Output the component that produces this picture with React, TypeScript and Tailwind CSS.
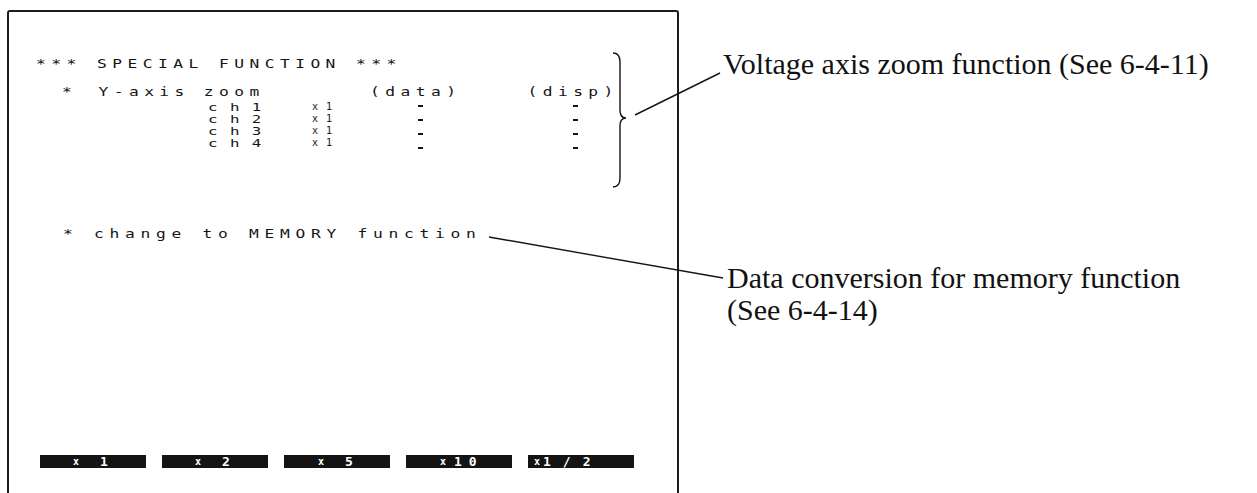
import React from 'react';

const mono = { fontFamily: "'DejaVu Sans Mono', 'Liberation Mono', monospace" };
const serif = { fontFamily: "'Liberation Serif', 'Times New Roman', serif" };

const channels = ['ch1', 'ch2', 'ch3', 'ch4'];

function SoftKey({ children, pad }: { children: React.ReactNode; pad: string }) {
  return (
    <div className={`w-[106px] h-[13px] bg-[#141414] flex items-center text-white font-bold leading-none ${pad}`}>
      {children}
    </div>
  );
}

export default function App() {
  return (
    <div className="relative w-[1257px] h-[493px] overflow-hidden bg-white flex items-start text-[#151515]">
      {/* screen dump (wide plotter lettering = mono stretched 1.3x) */}
      <div
        className="ml-[7px] mt-[10px] w-[672px] h-[500px] border-2 border-b-0 border-[#1c1c1c] rounded-t-[3px] pl-[27px] pt-[44px] flex flex-col shrink-0"
        style={mono}
      >
        <div className="origin-left scale-x-[1.3] text-[12.5px] leading-[15px] tracking-[4.2px] whitespace-pre">
          *** SPECIAL FUNCTION ***
        </div>

        <div className="mt-[13px] origin-left scale-x-[1.3] flex text-[12.5px] leading-[15px] tracking-[4.2px] whitespace-pre">
          <span className="ml-[20px] w-[28px]">*</span>
          <span className="w-[81px]">Y-axis</span>
          <span className="w-[128px]">zoom</span>
          <span className="w-[121px]">(data)</span>
          <span>(disp)</span>
        </div>

        <div className="mt-[2px] ml-[172px] flex">
          <div className="w-[104px] flex flex-col text-[10.5px] leading-[12px] tracking-[8.3px]">
            {channels.map((c) => (
              <span key={c} className="origin-left scale-x-[1.5]">{c}</span>
            ))}
          </div>
          <div className="w-[106px] flex flex-col text-[10px] leading-[12px] tracking-[1px] whitespace-pre">
            {channels.map((c) => (
              <span key={c}>x 1</span>
            ))}
          </div>
          <div className="w-[155px] flex flex-col pt-[4px] gap-[12px]">
            {channels.map((c) => (
              <div key={c} className="w-[5px] h-[2px] bg-[#151515]" />
            ))}
          </div>
          <div className="flex flex-col pt-[4px] gap-[12px]">
            {channels.map((c) => (
              <div key={c} className="w-[5px] h-[2px] bg-[#151515]" />
            ))}
          </div>
        </div>

        <div className="mt-[77px] ml-[27px] origin-left scale-x-[1.3] text-[12.5px] leading-[15px] tracking-[4.4px] whitespace-pre">
          * change to MEMORY function
        </div>

        <div className="mt-[214px] ml-[4px] flex gap-[16px]">
          <SoftKey pad="pl-[33px]">
            <span className="text-[10px]">x</span>
            <span className="ml-[21px] text-[13px]">1</span>
          </SoftKey>
          <SoftKey pad="pl-[33px]">
            <span className="text-[10px]">x</span>
            <span className="ml-[21px] text-[13px]">2</span>
          </SoftKey>
          <SoftKey pad="pl-[34px]">
            <span className="text-[10px]">x</span>
            <span className="ml-[21px] text-[13px]">5</span>
          </SoftKey>
          <SoftKey pad="pl-[34px]">
            <span className="text-[10px]">x</span>
            <span className="ml-[8px] text-[13px] tracking-[7px]">10</span>
          </SoftKey>
          <SoftKey pad="pl-[6px]">
            <span className="text-[10px]">x</span>
            <span className="ml-[3px] text-[13px] tracking-[12px]">1/2</span>
          </SoftKey>
        </div>
      </div>

      {/* callouts */}
      <div className="ml-[44px] flex flex-col text-[30px] leading-[32px] text-[#111] whitespace-nowrap" style={serif}>
        <div className="mt-[48px]">Voltage axis zoom function (See 6-4-11)</div>
        <div className="mt-[182px] ml-[4px]">Data conversion for memory function</div>
        <div className="ml-[4px]">(See 6-4-14)</div>
      </div>

      {/* brace and leader lines */}
      <svg className="absolute inset-0 pointer-events-none" width="1257" height="493" viewBox="0 0 1257 493" fill="none">
        <path
          d="M613 53 Q620 53 620 62 L620 110 Q620 118 626 118 Q620 118 620 126 L620 178 Q620 187 613 187"
          stroke="#151515"
          strokeWidth="1.4"
        />
        <path d="M635 115 L720 73" stroke="#151515" strokeWidth="1.4" />
        <path d="M489 237 L723 278" stroke="#151515" strokeWidth="1.4" />
      </svg>
    </div>
  );
}
